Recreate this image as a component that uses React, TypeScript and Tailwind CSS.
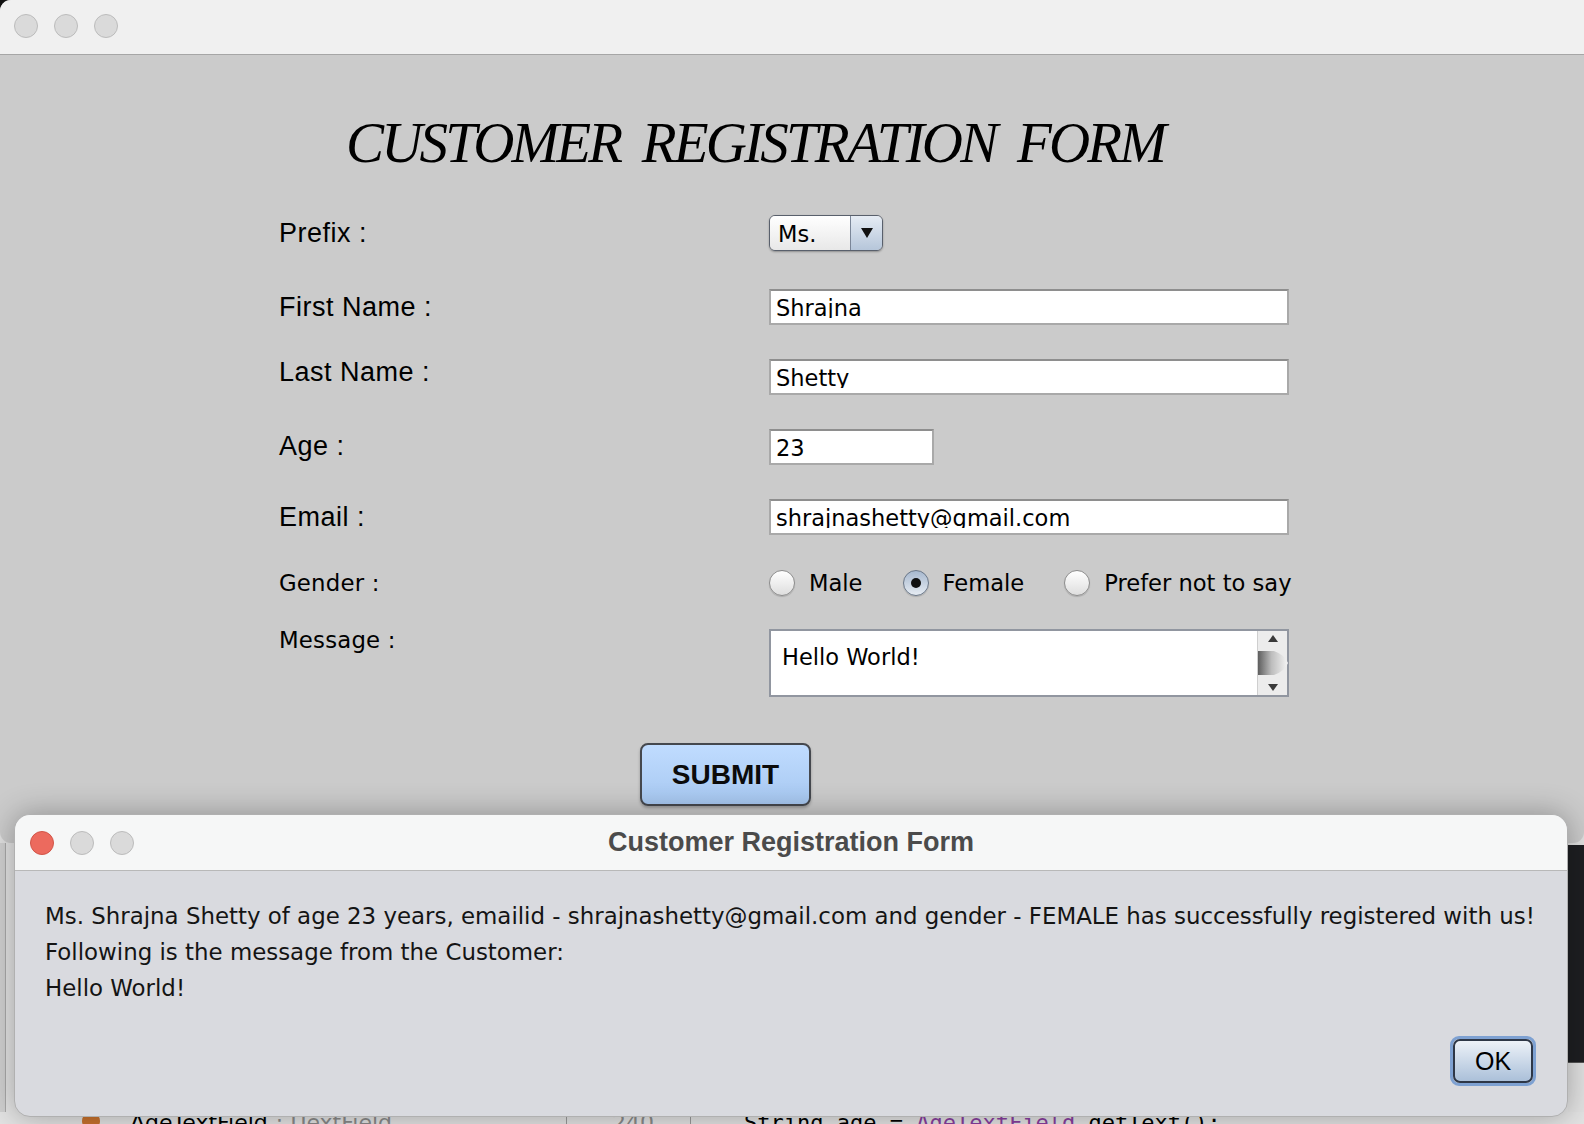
import React from "react";

const LUCIDA = "font-['DejaVu_Sans',sans-serif]";
const HELV = "font-['Liberation_Sans',Arial,sans-serif]";

function Light({ color }: { color: "red" | "gray" }) {
  return (
    <div
      className={
        color === "red"
          ? "w-[24px] h-[24px] rounded-full bg-[#ec6a5e] border border-[#d25548]"
          : "w-[24px] h-[24px] rounded-full bg-[#dadada] border border-[#bcbcbc]"
      }
    />
  );
}

function Label({ children, kind = "helv", extra = "" }: { children: React.ReactNode; kind?: "helv" | "lucida"; extra?: string }) {
  return (
    <div
      className={`w-[490px] shrink-0 leading-none text-black whitespace-nowrap ${
        kind === "helv" ? `${HELV} text-[27px] tracking-[0.5px]` : `${LUCIDA} text-[22.8px] tracking-[0.2px]`
      } ${extra}`}
    >
      {children}
    </div>
  );
}

function TextField({ width, value }: { width: string; value: string }) {
  return (
    <div className={`h-[36px] ${width} border-2 border-[#a9a9a9] border-t-[#8e8e8e] bg-white`}>
      <div
        className={`h-[27px] overflow-hidden pl-[5px] pt-[6px] ${LUCIDA} text-[22.5px] leading-[22px] text-black whitespace-nowrap`}
      >
        {value}
      </div>
    </div>
  );
}

function Radio({ checked, label }: { checked?: boolean; label: string }) {
  return (
    <div className="flex items-center gap-[14px]">
      {checked ? (
        <div className="w-[26px] h-[26px] rounded-full border border-[#6b7889] bg-gradient-to-b from-[#a7b8ce] to-[#e6ecf3] flex items-center justify-center shadow-[0_1px_1px_rgba(0,0,0,0.15)]">
          <div className="w-[10px] h-[10px] rounded-full bg-[#111]" />
        </div>
      ) : (
        <div className="w-[26px] h-[26px] rounded-full border border-[#8d8d8d] bg-gradient-to-b from-[#ffffff] to-[#dedede] shadow-[0_1px_1px_rgba(0,0,0,0.15)]" />
      )}
      <span className={`${LUCIDA} text-[22.6px] leading-none text-black`}>{label}</span>
    </div>
  );
}

function Scrollbar() {
  return (
    <div className="w-[30px] h-full border-l border-[#cfcfcf] bg-[#ececec]">
      <svg width="30" height="64" viewBox="0 0 30 64">
        <defs>
          <linearGradient id="thumb" x1="0" y1="0" x2="1" y2="0">
            <stop offset="0" stopColor="#5e5e5e" />
            <stop offset="0.45" stopColor="#bdbdbd" />
            <stop offset="1" stopColor="#f6f6f6" />
          </linearGradient>
        </defs>
        <polygon points="10,11 15,4 20,11" fill="#3a3a3a" />
        <path d="M0 20 L16 20 Q27 24 30 32 Q27 40 16 44 L0 44 Z" fill="url(#thumb)" />
        <polygon points="10,53 20,53 15,60" fill="#3a3a3a" />
      </svg>
    </div>
  );
}

function Combo() {
  return (
    <div className="h-[36px] w-[114px] rounded-[6px] border border-[#59606c] flex overflow-hidden shadow-[0_1px_2px_rgba(0,0,0,0.3)]">
      <div className={`flex-1 bg-gradient-to-b from-[#ffffff] to-[#e8e8e8] pl-[8px] pt-[2px] flex items-center ${LUCIDA} text-[22.5px] leading-none text-black`}>
        Ms.
      </div>
      <div className="w-[32px] border-l border-[#7b8698] bg-gradient-to-b from-[#e6ecf4] to-[#b6c6da] flex items-center justify-center">
        <svg width="12" height="10" viewBox="0 0 12 10">
          <polygon points="0,0 12,0 6,10" fill="#111" />
        </svg>
      </div>
    </div>
  );
}

export default function App() {
  return (
    <div className="relative w-[1584px] h-[1124px] overflow-hidden bg-[#e1e1e1] flex flex-col">
      <div className="absolute left-0 top-0 w-[14px] h-[14px] bg-[#111]" />
      {/* Main window */}
      <div className="relative h-[843px] shrink-0 bg-[#cbcbcb] rounded-tl-[11px] rounded-b-[11px] flex flex-col overflow-hidden">
        <div className="h-[55px] shrink-0 bg-[#f0f0f0] border-b border-[#a6a6a6] flex items-start pt-[14px] pl-[14px] gap-[16px]">
          <Light color="gray" />
          <Light color="gray" />
          <Light color="gray" />
        </div>
        <div className="flex flex-col">
          <div className="mt-[59px] pl-[346px] h-[57px] font-['Liberation_Serif',serif] italic text-[57px] leading-[57px] tracking-[-2.8px] [word-spacing:10px] text-black whitespace-nowrap">
            CUSTOMER REGISTRATION FORM
          </div>
          <div className="pl-[279px] flex flex-col">
            <div className="mt-[44px] h-[36px] flex items-center">
              <Label>Prefix :</Label>
              <Combo />
            </div>
            <div className="mt-[38px] h-[36px] flex items-center">
              <Label>First Name :</Label>
              <TextField width="w-[520px]" value="Shrajna" />
            </div>
            <div className="mt-[34px] h-[36px] flex items-center">
              <Label extra="mb-[10px]">Last Name :</Label>
              <TextField width="w-[520px]" value="Shetty" />
            </div>
            <div className="mt-[34px] h-[36px] flex items-center">
              <Label extra="mb-[2px]">Age :</Label>
              <TextField width="w-[165px]" value="23" />
            </div>
            <div className="mt-[34px] h-[36px] flex items-center">
              <Label>Email :</Label>
              <TextField width="w-[520px]" value="shrajnashetty@gmail.com" />
            </div>
            <div className="mt-[35px] h-[26px] flex items-center">
              <Label kind="lucida">Gender :</Label>
              <div className="flex items-center gap-[40px]">
                <Radio label="Male" />
                <Radio checked label="Female" />
                <Radio label="Prefer not to say" />
              </div>
            </div>
            <div className="mt-[33px] h-[68px] flex items-start">
              <Label kind="lucida">Message :</Label>
              <div className="h-[68px] w-[520px] border-2 border-[#9196a0] bg-white flex">
                <div className={`flex-1 pl-[11px] pt-[15px] ${LUCIDA} text-[22.5px] leading-[22px] text-black`}>
                  Hello World!
                </div>
                <Scrollbar />
              </div>
            </div>
            <div className="mt-[46px] ml-[361px] h-[63px] w-[171px] rounded-[8px] border-2 border-[#45484e] bg-gradient-to-b from-[#c0dcff] to-[#a7c8f1] shadow-[0_2px_3px_rgba(0,0,0,0.25)] flex items-center justify-center">
              <span className={`${HELV} font-bold text-[28px] leading-none text-[#0b0b0b]`}>SUBMIT</span>
            </div>
          </div>
        </div>
      </div>

      {/* IDE behind */}
      <div className="flex-1 flex flex-col">
        <div className="flex-1 flex">
          <div className="w-[6px] border-r border-[#a9a9a9] bg-[#d0d0d0]" />
          <div className="flex-1 bg-[#e3e3e3]" />
          <div className="w-[16px] mt-[2px] h-[218px] bg-[#1e1f22] border-b border-[#555]" />
        </div>
        <div className={`h-[12px] shrink-0 flex items-start bg-[#e3e3e3] ${LUCIDA} text-[22px] leading-none whitespace-nowrap overflow-hidden`}>
          <div className="ml-[82px] w-[18px] h-[18px] bg-[#c9722e] rounded-full" />
          <span className="ml-[30px] text-black">AgeTextField</span>
          <span className="ml-[8px] text-[#8a8a8a]">: JTextField</span>
          <div className="ml-[174px] w-[1px] h-[12px] bg-[#9a9a9a]" />
          <span className="ml-[45px] text-[#8a8a8a]">240</span>
          <div className="ml-[36px] w-[1px] h-[12px] bg-[#9a9a9a]" />
          <span className="ml-[53px] font-['DejaVu_Sans_Mono',monospace] text-black">
            String age = <span className="text-[#8a3fa0]">AgeTextField</span>.getText();
          </span>
        </div>
      </div>

      {/* Dialog window */}
      <div className="absolute left-[14px] top-[814px] w-[1554px] h-[303px] rounded-[16px] overflow-hidden flex flex-col bg-[#d9dadf] shadow-[0_0_30px_rgba(0,0,0,0.3)] border border-[#b0b0b0]">
        <div className="h-[56px] shrink-0 bg-[#f6f7f7] border-b border-[#b8b8b8] grid grid-cols-[1fr_auto_1fr] items-center">
          <div className="flex items-center gap-[16px] pl-[15px]">
            <Light color="red" />
            <Light color="gray" />
            <Light color="gray" />
          </div>
          <div className={`${HELV} font-bold text-[27px] leading-none text-[#4b4b4b]`}>Customer Registration Form</div>
          <div />
        </div>
        <div className="flex-1 flex flex-col">
          <div className={`pl-[30px] pt-[27px] ${LUCIDA} text-[22.9px] leading-[36px] text-[#141414] whitespace-nowrap`}>
            <div>Ms. Shrajna Shetty of age 23 years, emailid - shrajnashetty@gmail.com and gender - FEMALE has successfully registered with us!</div>
            <div>Following is the message from the Customer:</div>
            <div>Hello World!</div>
          </div>
          <div className="flex-1" />
          <div className="flex justify-end pr-[31px] pb-[30px]">
            <div className="w-[86px] h-[50px] rounded-[9px] border-[3px] border-[#7ea1d2]">
              <div className="w-full h-full rounded-[7px] border-2 border-[#2e3747] bg-gradient-to-b from-[#edf2f8] to-[#abc0d9] flex items-center justify-center">
                <span className={`${HELV} text-[25px] leading-none text-black`}>OK</span>
              </div>
            </div>
          </div>
        </div>
      </div>
    </div>
  );
}
